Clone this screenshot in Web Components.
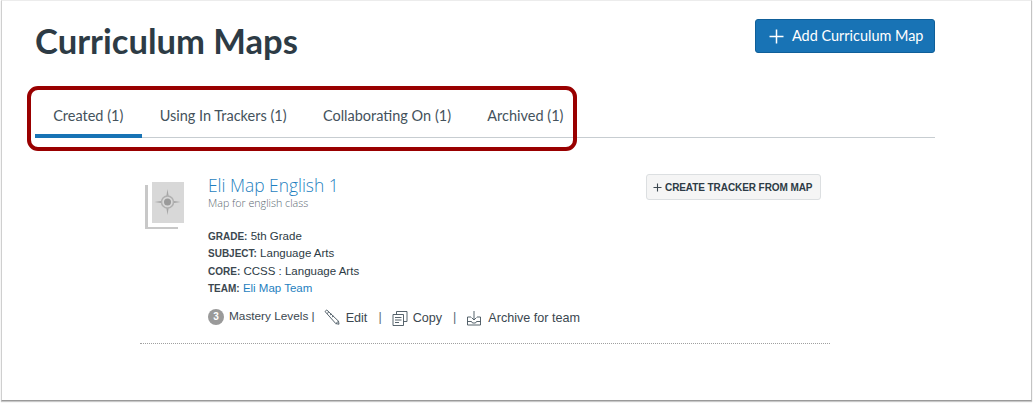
<!DOCTYPE html>
<html lang="en">
<head>
<meta charset="utf-8">
<title>Curriculum Maps</title>
<style>
  html, body { margin: 0; height: 100%; background: #fff; overflow: hidden; }
  body { font-family: "Liberation Sans", Arial, sans-serif; color: #2d3b45; }
</style>
</head>
<body>
<app-frame>
  <page-header heading="Curriculum Maps" action="Add Curriculum Map"></page-header>
  <tab-bar>
    <tab-item active>Created (1)</tab-item>
    <tab-item>Using In Trackers (1)</tab-item>
    <tab-item>Collaborating On (1)</tab-item>
    <tab-item>Archived (1)</tab-item>
  </tab-bar>
  <map-card title="Eli Map English 1" description="Map for english class">
    <meta-row label="Grade:">5th Grade</meta-row>
    <meta-row label="Subject:">Language Arts</meta-row>
    <meta-row label="Core:">CCSS : Language Arts</meta-row>
    <meta-row label="Team:" link>Eli Map Team</meta-row>
  </map-card>
</app-frame>

<script>
class AppFrame extends HTMLElement {
  constructor() {
    super();
    this.attachShadow({ mode: "open" });
    this.shadowRoot.innerHTML = `
      <style>
        :host {
          display: block;
          box-sizing: border-box;
          width: 1031px;
          height: 401px;
          margin-left: 1px;
          padding: 0 96px 0 33px;
          border-top: 1px solid #ececec;
          border-left: 1px solid #cfcfcf;
          border-right: 1px solid #c4c4c4;
          border-bottom: 1px solid #9a9a9a;
          box-shadow: 0 1px 1px #c8c8c8;
          background: #fff;
        }
      </style>
      <slot></slot>
    `;
  }
}

class PageHeader extends HTMLElement {
  constructor() {
    super();
    this.attachShadow({ mode: "open" });
  }

  connectedCallback() {
    const heading = this.getAttribute("heading") || "";
    const action = this.getAttribute("action") || "";
    this.shadowRoot.innerHTML = `
      <style>
        :host {
          display: flex;
          justify-content: space-between;
          align-items: flex-start;
          height: 99px;
          font-family: Lato, sans-serif;
        }
        h1 {
          margin: 19px 0 0;
          font-size: 34.6px;
          line-height: 42px;
          font-weight: 700;
          color: #2d3b45;
        }
        button {
          display: flex;
          align-items: center;
          gap: 8px;
          box-sizing: border-box;
          width: 180px;
          height: 34px;
          margin-top: 18px;
          padding: 0 0 2px 13px;
          border: 1px solid #0f5f99;
          border-radius: 3px;
          background: #1873b5;
          color: #fff;
          font: 400 14.45px Lato, sans-serif;
        }
        svg { width: 15px; height: 15px; flex: none; margin-top: 2px; }
      </style>
      <h1>${heading}</h1>
      <button>
        <svg viewBox="0 0 15 15"><path d="M7.5 0.5v14M0.5 7.5h14" stroke="#fff" stroke-width="1.5" fill="none"/></svg>
        ${action}
      </button>
    `;
  }
}

class TabBar extends HTMLElement {
  constructor() {
    super();
    this.attachShadow({ mode: "open" });
    this.shadowRoot.innerHTML = `
      <style>
        :host {
          display: flex;
          position: relative;
          height: 38px;
          box-sizing: border-box;
          border-bottom: 1px solid #c7cdd1;
        }
        /* annotation drawn over the tabs */
        .callout {
          position: absolute;
          left: -8px;
          top: -14px;
          width: 550px;
          height: 65px;
          box-sizing: border-box;
          border: 4px solid #990000;
          border-radius: 11px;
          pointer-events: none;
        }
      </style>
      <slot></slot>
      <div class="callout"></div>
    `;
  }
}

class TabItem extends HTMLElement {
  constructor() {
    super();
    this.attachShadow({ mode: "open" });
    this.shadowRoot.innerHTML = `
      <style>
        :host {
          display: block;
          box-sizing: border-box;
          height: 38px;
          padding: 7px 18.15px 0;
          font: 400 14.5px/18px Lato, sans-serif;
          color: #44525c;
          white-space: nowrap;
        }
        :host([active]) {
          border-bottom: 4px solid #1873b5;
          padding-right: 18.7px;
          margin-right: -0.55px;
        }
      </style>
      <slot></slot>
    `;
  }
}

class MapCard extends HTMLElement {
  constructor() {
    super();
    this.attachShadow({ mode: "open" });
  }

  connectedCallback() {
    const title = this.getAttribute("title") || "";
    const description = this.getAttribute("description") || "";
    this.shadowRoot.innerHTML = `
      <style>
        :host {
          display: grid;
          grid-template-columns: 68px 1fr auto;
          box-sizing: border-box;
          width: 690px;
          height: 206px;
          margin: 0 0 0 105px;
          padding: 36px 9px 0 0;
          border-bottom: 1px dotted #a0a0a0;
          font-size: 11px;
          color: #2d3b45;
        }
        .thumb { margin: 3px 0 0 5px; width: 46px; height: 52px; }
        .thumb svg { display: block; }
        .title {
          font: 300 17.4px/22px "Open Sans", sans-serif;
          color: #1f7fc0;
        }
        .desc {
          font: 300 10.7px/14px "Open Sans", sans-serif;
          color: #5d6a73;
          margin-bottom: 18px;
        }
        .tracker {
          display: flex;
          align-items: center;
          gap: 3px;
          box-sizing: border-box;
          height: 26px;
          width: 175px;
          padding: 0 0 0 6px;
          border: 1px solid #dcdfe1;
          border-radius: 3px;
          background: #f5f5f5;
          color: #2d3b45;
          font: 700 10px "Liberation Sans", sans-serif;
          letter-spacing: -0.08px;
        }
        .actions {
          display: flex;
          align-items: flex-start;
          height: 20px;
          margin-top: 12px;
          font-size: 12.6px;
          line-height: 16px;
          white-space: nowrap;
          color: #3b474f;
        }
        .mastery { font-size: 11.8px; margin-top: -1px; }
        .badge {
          display: inline-flex;
          align-items: center;
          justify-content: center;
          width: 16px;
          height: 16px;
          margin-right: 5px;
          border-radius: 50%;
          background: #9a9a9a;
          color: #fff;
          font-size: 10px;
          line-height: 16px;
          font-weight: 700;
        }
        .sep { color: #5d6a73; }
        svg.ic { flex: none; }
        .label { margin-top: 1px; }
      </style>
      <div class="thumb">
        <svg width="46" height="52" viewBox="0 0 46 52">
          <rect x="0" y="8" width="33" height="44" fill="#c8c8c8"/>
          <rect x="3" y="1" width="40" height="49" fill="#fff"/>
          <rect x="7" y="5" width="32" height="41" fill="#d8d8d8"/>
          <path d="M22.5 12l1.3 8h-2.6zM22.5 38l1.3-8h-2.6zM9.5 25l8-1.3v2.6zM35.5 25l-8-1.3v2.6z" fill="#a6a6a6"/>
          <circle cx="22.5" cy="25" r="6" fill="#d8d8d8" stroke="#b0b0b0" stroke-width="1.5"/>
          <circle cx="22.5" cy="25" r="3.5" fill="#9a9a9a"/>
        </svg>
      </div>
      <div>
        <div class="title">${title}</div>
        <div class="desc">${description}</div>
        <slot></slot>
        <div class="actions">
          <span class="badge">3</span>
          <span class="mastery">Mastery Levels |</span>
          <svg class="ic" style="margin-left:9px" width="16" height="16" viewBox="0 0 16 16" fill="none" stroke="#44525c" stroke-width=".9"><path d="M1 2.5L2.8 1l11.7 11.2.5 3-3.2-.6zM3 4.6l1.9-1.7M11.8 14.6l2.7-2.4M6 6l1.5-1M8 8l1.5-1"/></svg>
          <span class="label" style="margin-left:6px">Edit</span>
          <span class="sep" style="margin-left:11px">|</span>
          <svg class="ic" style="margin-left:10px;margin-top:1px" width="16" height="16" viewBox="0 0 16 16" fill="none" stroke="#44525c" stroke-width=".9"><path d="M1 4.5h10.5v11H1zM4.5 4.5V1.5H15v10h-3.5M3 7.5h6.5M3 10h6.5M3 12.5h4"/></svg>
          <span class="label" style="margin-left:5px">Copy</span>
          <span class="sep" style="margin-left:11px">|</span>
          <svg class="ic" style="margin-left:10px;margin-top:1px" width="16" height="16" viewBox="0 0 16 16" fill="none" stroke="#44525c" stroke-width=".9"><path d="M5 7H1.5v8h13V7H11M8 1v8.5M5.5 7.5L8 10l2.5-2.5M1.5 11.5h4l1 1.5h3l1-1.5h4"/></svg>
          <span class="label" style="margin-left:6px">Archive for team</span>
        </div>
      </div>
      <button class="tracker"><svg width="9" height="9" viewBox="0 0 9 9"><path d="M4.5 .5v8M.5 4.5h8" stroke="#3b474f" stroke-width="1.1"/></svg>CREATE TRACKER FROM MAP</button>
    `;
  }
}

class MetaRow extends HTMLElement {
  constructor() {
    super();
    this.attachShadow({ mode: "open" });
  }

  connectedCallback() {
    const label = this.getAttribute("label") || "";
    const color = this.hasAttribute("link") ? "#1f7fc0" : "#2d3b45";
    this.shadowRoot.innerHTML = `
      <style>
        :host {
          display: block;
          font: 400 11.5px/17.3px "Liberation Sans", sans-serif;
          white-space: nowrap;
        }
        b { font-size: 10px; line-height: 1; text-transform: uppercase; color: #3b474f; }
        span { color: ${color}; }
      </style>
      <b>${label}</b> <span><slot></slot></span>
    `;
  }
}

customElements.define("app-frame", AppFrame);
customElements.define("page-header", PageHeader);
customElements.define("tab-bar", TabBar);
customElements.define("tab-item", TabItem);
customElements.define("map-card", MapCard);
customElements.define("meta-row", MetaRow);
</script>
</body>
</html>
